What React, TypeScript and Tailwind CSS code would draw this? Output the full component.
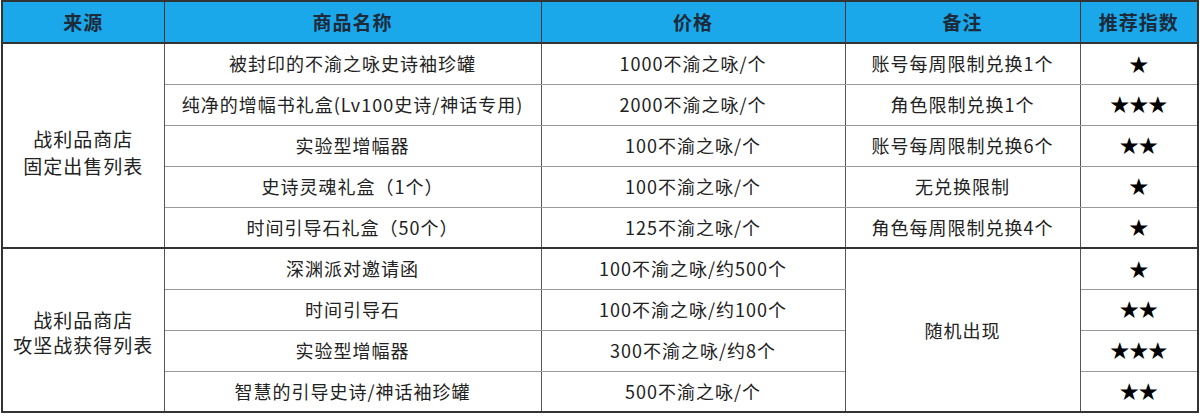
import React from "react";

type Row = { name: string; price: string; note?: string; stars: number };

const fixedRows: Row[] = [
  { name: "被封印的不渝之咏史诗袖珍罐", price: "1000不渝之咏/个", note: "账号每周限制兑换1个", stars: 1 },
  { name: "纯净的增幅书礼盒(Lv100史诗/神话专用)", price: "2000不渝之咏/个", note: "角色限制兑换1个", stars: 3 },
  { name: "实验型增幅器", price: "100不渝之咏/个", note: "账号每周限制兑换6个", stars: 2 },
  { name: "史诗灵魂礼盒（1个）", price: "100不渝之咏/个", note: "无兑换限制", stars: 1 },
  { name: "时间引导石礼盒（50个）", price: "125不渝之咏/个", note: "角色每周限制兑换4个", stars: 1 },
];

const raidRows: Row[] = [
  { name: "深渊派对邀请函", price: "100不渝之咏/约500个", stars: 1 },
  { name: "时间引导石", price: "100不渝之咏/约100个", stars: 2 },
  { name: "实验型增幅器", price: "300不渝之咏/约8个", stars: 3 },
  { name: "智慧的引导史诗/神话袖珍罐", price: "500不渝之咏/个", stars: 2 },
];

const cell = "border-x border-x-[#555] border-y border-y-[#9a9a9a] text-center align-middle whitespace-nowrap";
const head = "border border-[#333] text-center align-middle font-bold text-[19px] text-[#1c2a3a] tracking-[1px]";

export default function App() {
  return (
    <div
      className="w-[1200px] h-[416px] bg-white pl-px text-[18px] tracking-[1px] text-[#222]"
      style={{ fontFamily: '"Noto Sans CJK SC", "Noto Sans", sans-serif' }}
    >
      <table className="table-fixed border-collapse border-2 border-[#333] w-[1196px]">
        <colgroup>
          <col className="w-[162px]" />
          <col className="w-[377px]" />
          <col className="w-[304px]" />
          <col className="w-[235px]" />
          <col className="w-[118px]" />
        </colgroup>
        <thead>
          <tr className="h-[42px] bg-[#1aa8ea] border-b-2 border-[#333]">
            <th className={head}>来源</th>
            <th className={head}>商品名称</th>
            <th className={head}>价格</th>
            <th className={head}>备注</th>
            <th className={head}>推荐指数</th>
          </tr>
        </thead>
        <tbody>
          {fixedRows.map((r, i) => (
            <tr key={r.name} className={`h-[41px] ${i === fixedRows.length - 1 ? "border-b-2 border-b-[#333]" : ""}`}>
              {i === 0 && (
                <td rowSpan={5} className={`${cell} text-[19px] leading-[27px] pt-3`}>
                  战利品商店
                  <br />
                  固定出售列表
                </td>
              )}
              <td className={cell}>{r.name}</td>
              <td className={cell}>{r.price}</td>
              <td className={cell}>{r.note}</td>
              <td className={`${cell} text-[19px] tracking-normal text-black`}>{"★".repeat(r.stars)}</td>
            </tr>
          ))}
          {raidRows.map((r, i) => (
            <tr key={r.name + i} className="h-[41px]">
              {i === 0 && (
                <td rowSpan={4} className={`${cell} text-[19px] leading-[25px] pt-1`}>
                  战利品商店
                  <br />
                  攻坚战获得列表
                </td>
              )}
              <td className={cell}>{r.name}</td>
              <td className={cell}>{r.price}</td>
              {i === 0 && (
                <td rowSpan={4} className={cell}>
                  随机出现
                </td>
              )}
              <td className={`${cell} text-[19px] tracking-normal text-black`}>{"★".repeat(r.stars)}</td>
            </tr>
          ))}
        </tbody>
      </table>
    </div>
  );
}
